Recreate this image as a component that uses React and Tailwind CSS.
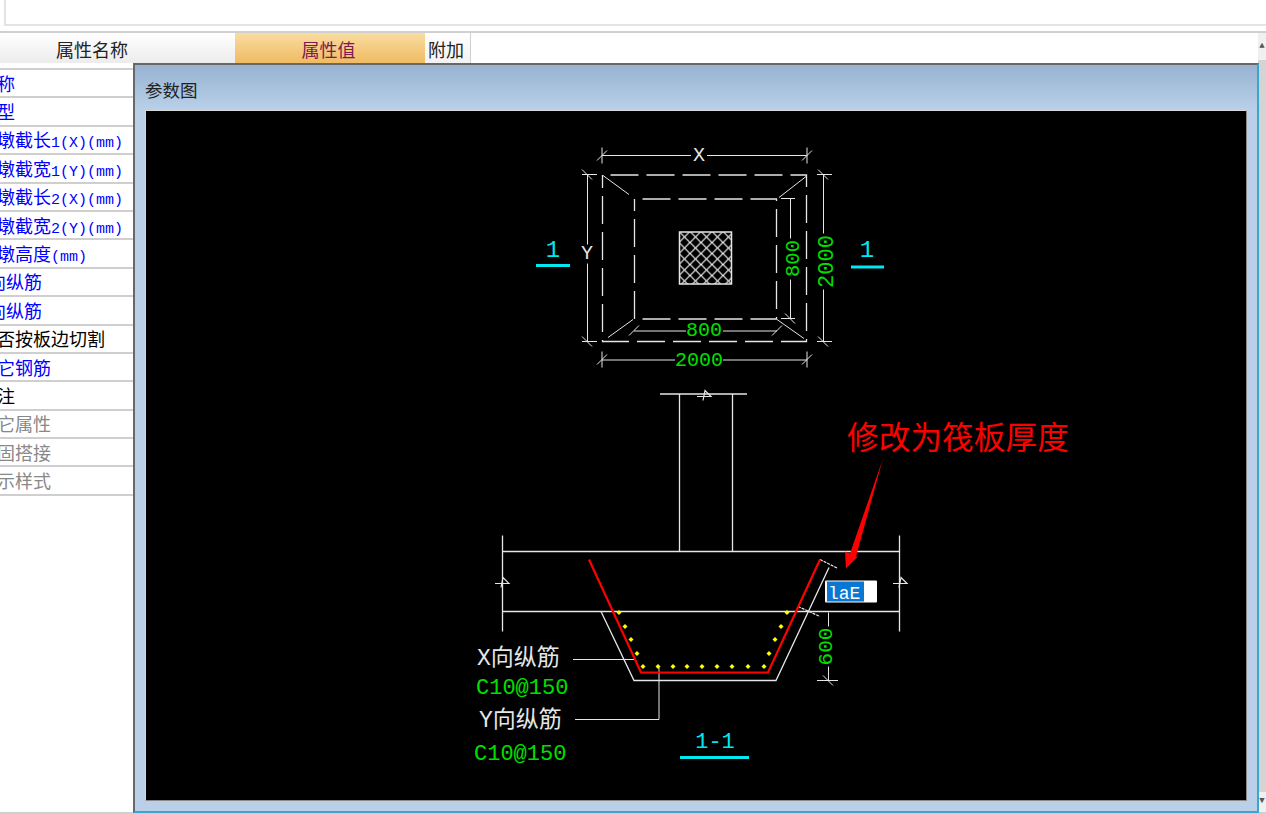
const rows = [
  { name: '名称', color: 'text-[#0000ff]' },
  { name: '类型', color: 'text-[#0000ff]' },
  { name: '柱墩截长', suffix: '1(X)(mm)', color: 'text-[#0000ff]' },
  { name: '柱墩截宽', suffix: '1(Y)(mm)', color: 'text-[#0000ff]' },
  { name: '柱墩截长', suffix: '2(X)(mm)', color: 'text-[#0000ff]' },
  { name: '柱墩截宽', suffix: '2(Y)(mm)', color: 'text-[#0000ff]' },
  { name: '柱墩高度', suffix: '(mm)', color: 'text-[#0000ff]' },
  { prefix: 'X', name: '向纵筋', color: 'text-[#0000ff]' },
  { prefix: 'Y', name: '向纵筋', color: 'text-[#0000ff]' },
  { name: '是否按板边切割', color: 'text-black' },
  { name: '其它钢筋', color: 'text-[#0000ff]' },
  { name: '备注', color: 'text-black' },
  { name: '其它属性', color: 'text-[#888888]' },
  { name: '锚固搭接', color: 'text-[#888888]' },
  { name: '显示样式', color: 'text-[#888888]' },
]

const dots = [
  [619, 612], [625, 626], [631, 639], [637, 653], [643, 666], [658, 666], [673, 666], [687, 666],
  [702, 666], [717, 666], [732, 666], [748, 666], [764, 666], [769, 653], [775, 639], [781, 626], [787, 612],
]

const W = '#e6e6e6'
const G = '#00e000'
const C = '#00e8f0'

function Tick({ x, y }) {
  return <path d={`M${x - 5} ${y + 5}L${x + 5} ${y - 5}`} stroke={W} strokeWidth="1" />
}

function BackTick({ x, y }) {
  return <path d={`M${x - 5} ${y - 5}L${x + 5} ${y + 5}`} stroke={W} strokeWidth="1" />
}

function BreakMark({ x, y }) {
  return <path d={`M${x - 7} ${y + 1}H${x + 7}L${x + 1} ${y - 5}L${x - 1} ${y + 5}`} fill="none" stroke={W} strokeWidth="1.2" />
}

function Label({ x, y, size = 19, color = W, rotate, children }) {
  return (
    <text
      x={x}
      y={y}
      fontSize={size}
      fill={color}
      textAnchor="middle"
      dominantBaseline="central"
      transform={rotate ? `rotate(-90 ${x} ${y})` : undefined}
    >
      {children}
    </text>
  )
}

function Drawing() {
  return (
    <svg
      viewBox="146 111 1100 688"
      className="block w-full h-full font-['Liberation_Mono','Noto_Sans_CJK_SC',monospace]"
    >
      <defs>
        <pattern id="hatch" width="11" height="11" patternUnits="userSpaceOnUse" patternTransform="translate(679 231)">
          <path d="M0 0L11 11M11 0L0 11" stroke="#f0f0f0" strokeWidth="1.2" />
        </pattern>
      </defs>

      {/* plan */}
      <g fill="none" stroke={W} strokeWidth="1.3">
        <rect x="602.5" y="174.5" width="204" height="166.5" strokeDasharray="28 8" strokeDashoffset="-8" />
        <rect x="634.5" y="198.5" width="142" height="120" strokeDasharray="28 8" strokeDashoffset="-8" />
        <path d="M603 175L629 194M806 176L779 197M608 337L633 319M777 319L804 338" strokeWidth="1" />
        <rect x="679.5" y="231.5" width="52" height="52" fill="url(#hatch)" strokeWidth="1.5" />

        <path d="M602 155H691M707 155H807M602 147V163M807 147V163" strokeWidth="1" />
        <path d="M587.5 174V244M587.5 263V341M582 174H597M582 341H597" strokeWidth="1" />
        <path d="M823.5 174V233M823.5 289V341M817 174H832M817 341H832" strokeWidth="1" />
        <path d="M790.5 198V238M790.5 279V318M781 198H795M781 318H795" strokeWidth="1" />
        <path d="M634 330.5H686M723 330.5H777" strokeWidth="1" />
        <path d="M602 359.5H675M723 359.5H807M602 351V367M807 351V367" strokeWidth="1" />
      </g>
      <Tick x={602} y={155} />
      <Tick x={807} y={155} />
      <BackTick x={587} y={174} />
      <BackTick x={587} y={341} />
      <BackTick x={823} y={174} />
      <BackTick x={823} y={341} />
      <BackTick x={790} y={318} />
      <Tick x={634} y={330} />
      <Tick x={777} y={330} />
      <Tick x={602} y={359} />
      <Tick x={807} y={359} />

      <Label x={699} y={155} size={20}>X</Label>
      <Label x={587} y={253} size={20}>Y</Label>
      <Label x={827} y={261} size={22} color={G} rotate>2000</Label>
      <Label x={793} y={258} size={20.5} color={G} rotate>800</Label>
      <Label x={704} y={330} size={20} color={G}>800</Label>
      <Label x={699} y={360} size={20} color={G}>2000</Label>

      <Label x={553} y={250} size={24} color={C}>1</Label>
      <path d="M536 265H570M851 266.5H884" stroke={C} strokeWidth="3" />
      <Label x={867} y={250} size={24} color={C}>1</Label>

      {/* section */}
      <g fill="none" stroke={W} strokeWidth="1.3">
        <path d="M660 393.5H747M679.5 393V551M732.5 393V551" />
        <path d="M502 551H900M502 611H900M502.5 535V631M899.5 535V631" />
        <path d="M601 611L634 680H776L829 567" />
        <path d="M573 659H635M575 719H659V667" strokeWidth="1" />
        <path d="M828.5 612V626M828.5 666V680M817 680H838" strokeWidth="1" />
        <path d="M820 559L838 568M798 606L820 616" strokeWidth="1.2" strokeDasharray="3 1" />
      </g>
      <BreakMark x={704} y={395} />
      <BreakMark x={502} y={582} />
      <BreakMark x={900} y={582} />
      <BackTick x={828} y={680} />

      <path d="M589 559L641 672H768L820 559" fill="none" stroke="#ff0000" strokeWidth="2.2" />
      {dots.map(([x, y]) => (
        <path key={`${x}-${y}`} d={`M${x} ${y - 2.5}L${x + 2.5} ${y}L${x} ${y + 2.5}L${x - 2.5} ${y}Z`} fill="#ffff00" />
      ))}

      <Label x={826} y={646} size={21} color={G} rotate>600</Label>

      <text x={477} y={658} fontSize={23} fill={W} dominantBaseline="central">X向纵筋</text>
      <text x={476} y={688} fontSize={22} fill={G} dominantBaseline="central">C10@150</text>
      <text x={479} y={720} fontSize={23} fill={W} dominantBaseline="central">Y向纵筋</text>
      <text x={474} y={754} fontSize={22} fill={G} dominantBaseline="central">C10@150</text>

      <Label x={715} y={742} size={22} color={C}>1-1</Label>
      <path d="M680 757H749" stroke={C} strokeWidth="3" />

      {/* annotation */}
      <text x={847} y={440} fontSize={31.7} fill="#ff0000" dominantBaseline="central">修改为筏板厚度</text>
      <path d="M883 458L856 556L858 556L846 568L845 551L850 553Z" fill="#ff0000" />

      <rect x="825" y="580" width="52" height="22" rx="1" fill="#ffffff" />
      <rect x="826" y="581" width="38" height="20" fill="#0a78d2" />
      <path d="M826.5 581V601" stroke="#ffffff" strokeWidth="1" />
      <text x={828} y={593} fontSize={18} fill="#ffffff" dominantBaseline="central">laE</text>
    </svg>
  )
}

export default function App() {
  return (
    <div className="relative h-[814px] w-full overflow-hidden bg-white font-['Liberation_Mono','Noto_Sans_CJK_SC',monospace]">
      <div className="h-[33px] border-b-2 border-[#cfcfcf] pb-[5px]">
        <div className="ml-1 h-[26px] border-l-2 border-b-2 border-[#e4e4e4]" />
      </div>

      <div className="flex h-[30px] text-[18px] leading-[38px]">
        <div className="w-[235px] bg-gradient-to-b from-white to-[#ececec] pl-[56px] text-[#222222]">属性名称</div>
        <div className="w-[190px] bg-gradient-to-b from-[#f9dca0] to-[#efbb62] pr-[3px] text-center text-[#7a1a52]">属性值</div>
        <div className="w-[46px] border-r border-[#d0d0d0] bg-gradient-to-b from-white to-[#f2f2f2] pl-[3px] text-[#222222]">附加</div>
      </div>

      <div className="mt-[5px] w-[235px] overflow-hidden border-t-2 border-[#cfcfcf]">
        {rows.map((row, i) => (
          <div key={i} className="flex h-[28.4px] items-center border-b-2 border-[#cfcfcf] pt-[6px] text-[18px] whitespace-nowrap">
            <span className={`-ml-[21px] ${row.color}`}>
              {row.prefix && <span className="text-[15px]">{row.prefix}</span>}
              {row.name}
              {row.suffix && <span className="text-[15px]">{row.suffix}</span>}
            </span>
          </div>
        ))}
      </div>

      {/* scrollbar */}
      <div className="absolute top-[33px] right-0 bottom-[2px] flex w-[8px] flex-col bg-[#d4d4d4]">
        <div className="flex h-[27px] items-center justify-center bg-[#f0f0f0] text-[9px] text-[#555555]">▲</div>
        <div className="flex-1" />
        <div className="flex h-[20px] items-center justify-center bg-[#f0f0f0] text-[9px] text-[#555555]">▼</div>
      </div>

      <div className="absolute inset-x-0 bottom-0 h-[2px] bg-[#cfcfcf]" />

      {/* 参数图 dialog */}
      <div className="absolute top-[63px] left-[133px] flex h-[750px] w-[1126px] flex-col border-2 border-[#686868] border-r-[#3aa5d0] border-b-[#3aa5d0] bg-[#b9d0e8]">
        <div className="h-[45px] shrink-0 bg-gradient-to-b from-[#97b3d1] to-[#b9d0e8] pt-[15px] pl-[10px] text-[17.5px] leading-[24px] text-[#222222]">
          参数图
        </div>
        <div className="mx-[10px] mb-[10px] flex-1 overflow-hidden border border-[#d8d8d8] border-r-[#8a8a8a] border-b-[#8a8a8a] bg-black">
          <Drawing />
        </div>
      </div>
    </div>
  )
}
